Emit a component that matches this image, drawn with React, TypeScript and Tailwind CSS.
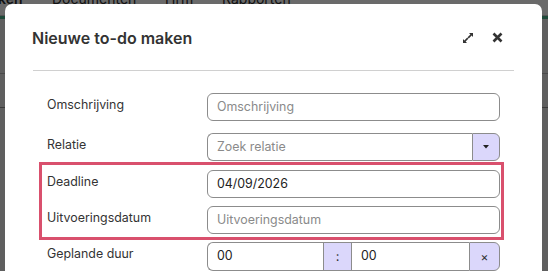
import React from "react";

function ExpandIcon() {
  return (
    <svg width="12" height="12" viewBox="0 0 12 12" fill="#333">
      <path d="M7 1h4v4l-1.4-1.4L6.8 6.4 5.6 5.2 8.4 2.4z" />
      <path d="M5 11H1V7l1.4 1.4L5.2 5.6l1.2 1.2L3.6 9.6z" />
    </svg>
  );
}

function CloseIcon() {
  return (
    <svg width="11" height="11" viewBox="0 0 11 11">
      <path d="M1.5 1.5l8 8M9.5 1.5l-8 8" stroke="#333" strokeWidth="2.6" strokeLinecap="butt" />
    </svg>
  );
}

function Label({ children, inner }: { children: React.ReactNode; inner?: boolean }) {
  return (
    <div
      className={`${inner ? "w-[165px] pl-[5px]" : "w-[167px] pl-[7px]"} text-[12.4px] leading-none text-[#333] pt-[6px]`}
    >
      {children}
    </div>
  );
}

const inputBase =
  "h-[28px] border border-[#8c8c8c] bg-white flex items-center px-[9px] text-[12.4px]";

export default function App() {
  return (
    <div
      className="relative w-[548px] h-[271px] overflow-hidden bg-[#5f5f5f]"
      style={{ fontFamily: "Inter, 'Noto Sans', sans-serif" }}
    >
      {/* background page */}
      <div className="h-[28px] bg-[#6a6a6a] border-b border-[#555]">
        <div className="flex -mt-[12px] text-[14px] text-[#111] whitespace-nowrap">
          <span className="font-semibold -ml-[2px] w-[54px]">ken</span>
          <span className="w-[113px]">Documenten</span>
          <span className="w-[57px]">Hrm</span>
          <span>Rapporten</span>
        </div>
      </div>
      <div className="h-[3px] bg-[#1f4a3a]" />
      <div className="h-[54px]" />
      <div className="h-px bg-[#4a4a4a]" />
      <div className="h-[33px]" />
      <div className="h-px bg-[#3a3a3a]" />

      {/* modal */}
      <div className="absolute left-[5px] top-[4px] w-[537px] h-[300px] bg-white rounded-t-[7px]">
        <div className="flex items-center h-[66px] pl-[28px] pr-[39px]">
          <div className="flex-1 text-[16px] font-semibold text-[#333] pt-[1px] -ml-[1px]">Nieuwe to-do maken</div>
          <div className="flex items-center gap-[18px] pt-[1px]">
            <ExpandIcon />
            <CloseIcon />
          </div>
        </div>
        <div className="mx-[28px] h-px bg-[#d0d0d0]" />
        <div className="pl-[35px] pr-[42px] pt-[22px] flex flex-col">
          <div className="flex h-[28px]">
            <Label>Omschrijving</Label>
            <div className={`${inputBase} flex-1 rounded-[6px] text-[#8a8a8a]`}>Omschrijving</div>
          </div>
          <div className="flex h-[28px] mt-[12px]">
            <Label>Relatie</Label>
            <div className="flex flex-1">
              <div className={`${inputBase} flex-1 rounded-l-[6px] border-r-0 text-[#8a8a8a]`}>Zoek relatie</div>
              <div className="w-[28px] h-[28px] bg-[#dbd7fb] border border-[#8c8c8c] rounded-r-[6px] flex items-center justify-center">
                <svg width="6" height="4" viewBox="0 0 6 4">
                  <path d="M0 0h6L3 3.5z" fill="#222" />
                </svg>
              </div>
            </div>
          </div>
          <div className="-ml-[1px] -mr-[4px] mt-[1px] border-[3px] border-[#d9506d] pr-[1px] pt-[5px] pb-[3px]">
            <div className="flex h-[28px]">
              <Label inner>Deadline</Label>
              <div className={`${inputBase} flex-1 rounded-[6px] text-[#222]`}>04/09/2026</div>
            </div>
            <div className="flex h-[28px] mt-[8px]">
              <Label inner>Uitvoeringsdatum</Label>
              <div className={`${inputBase} flex-1 rounded-[6px] text-[#8a8a8a]`}>Uitvoeringsdatum</div>
            </div>
          </div>
          <div className="flex h-[29px] mt-[2px]">
            <Label>Geplande duur</Label>
            <div className="flex flex-1">
              <div className={`${inputBase} h-[29px] w-[116px] rounded-l-[6px] border-r-0 text-[#222]`}>00</div>
              <div className="w-[29px] h-[29px] bg-[#dbd7fb] border border-[#8c8c8c] flex items-center justify-center text-[13px] text-[#333]">
                :
              </div>
              <div className={`${inputBase} h-[29px] flex-1 border-l-0 border-r-0 text-[#222]`}>00</div>
              <div className="w-[31px] h-[29px] bg-[#dbd7fb] border border-[#8c8c8c] rounded-r-[6px] flex items-center justify-center text-[12px] text-[#333]">
                ×
              </div>
            </div>
          </div>
        </div>
      </div>
    </div>
  );
}
